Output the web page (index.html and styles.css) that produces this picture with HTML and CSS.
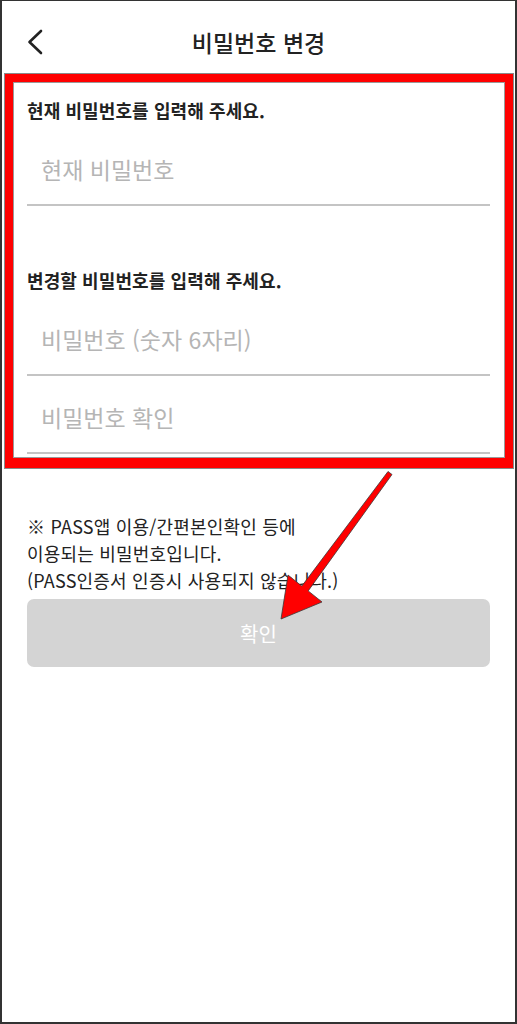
FILE: index.html
```html
<!DOCTYPE html>
<html lang="ko">
  <head>
    <meta charset="UTF-8" />
    <meta name="viewport" content="width=device-width, initial-scale=1.0" />
    <title>비밀번호 변경</title>
    <link rel="stylesheet" href="styles.css">
  </head>
  <body>
    <div class="screen">
      <header class="topbar">
        <button class="back" type="button" aria-label="뒤로">
          <svg width="20" height="26" viewBox="0 0 20 26">
            <path d="M15 2 L3.5 13 L15 24" fill="none" stroke="#222" stroke-width="2.6" stroke-linecap="round" stroke-linejoin="round" />
          </svg>
        </button>
        <h1>비밀번호 변경</h1>
      </header>

      <div class="highlight">
        <form class="pw-form" id="pwForm">
          <div class="field-group">
            <p class="group-label">현재 비밀번호를 입력해 주세요.</p>
            <input class="pw-input" type="password" id="current" placeholder="현재 비밀번호" />
          </div>

          <div class="field-group next">
            <p class="group-label">변경할 비밀번호를 입력해 주세요.</p>
            <input class="pw-input" type="password" id="newPw" placeholder="비밀번호 (숫자 6자리)" />
            <input class="pw-input" type="password" id="confirmPw" placeholder="비밀번호 확인" />
          </div>
        </form>
      </div>

      <p class="notice">
        ※ PASS앱 이용/간편본인확인 등에<br />
        이용되는 비밀번호입니다.<br />
        (PASS인증서 인증시 사용되지 않습니다.)
      </p>

      <button class="confirm" type="submit" form="pwForm" disabled>확인</button>

      <!-- annotation arrow -->
      <svg class="arrow" width="517" height="700" viewBox="0 0 517 700">
        <polygon
          points="388,471.5 392,474.5 308.2,590.9 322,602 281,619 288,575 301.8,586.1"
          fill="#ff0000"
          stroke="#3a3a3a"
          stroke-width="0.8"
          stroke-linejoin="miter"
        />
      </svg>
    </div>
  </body>
</html>
```

FILE: styles.css
```css
* {
  box-sizing: border-box;
}
body {
  margin: 0;
  font-family: "Noto Sans CJK KR", "Noto Sans", sans-serif;
  background: #fff;
  color: #222;
}
.screen {
  position: relative;
  width: 517px;
  height: 1024px;
  border: 2px solid #333;
  border-top-width: 1px;
  background: #fff;
}
.topbar {
  position: relative;
  height: 73px;
  padding-top: 8px;
  display: flex;
  align-items: center;
  justify-content: center;
}
.topbar h1 {
  margin: 0;
  font-size: 23px;
  font-weight: 500;
  color: #222;
}
.back {
  position: absolute;
  left: 24px;
  top: 28px;
  padding: 0;
  border: none;
  background: none;
  display: flex;
}
.highlight {
  margin: 0 2px 0 3px;
  border: 8px solid #ff0000;
  border-bottom-width: 10px;
  outline: 1px solid #8a8a8a;
  box-shadow: inset 0 0 0 1px #9a9a9a;
  padding: 16px 15px 4px 14px;
}
.field-group {
  display: flex;
  flex-direction: column;
}
.field-group.next {
  margin-top: 62px;
}
.group-label {
  margin: 0 0 12px;
  font-size: 18px;
  line-height: 24px;
  font-weight: 700;
  color: #222;
  letter-spacing: 0.1px;
}
.pw-input {
  height: 72px;
  padding: 0 14px;
  border: none;
  border-bottom: 2px solid #c4c4c4;
  font-family: inherit;
  font-size: 23px;
  color: #222;
  background: transparent;
  outline: none;
}
.pw-input + .pw-input {
  margin-top: 6px;
}
.pw-input::placeholder {
  color: #b5b5b5;
}
.notice {
  margin: 45px 25px 5px;
  font-size: 18px;
  line-height: 27px;
  color: #222;
  letter-spacing: 0.2px;
}
.confirm {
  display: block;
  width: 463px;
  height: 68px;
  margin: 0 0 0 25px;
  border: none;
  border-radius: 7px;
  background-color: #d4d4d4;
  color: #fff;
  font-family: inherit;
  font-size: 20px;
}
.arrow {
  position: absolute;
  left: -2px;
  top: -1px;
  pointer-events: none;
}
```
